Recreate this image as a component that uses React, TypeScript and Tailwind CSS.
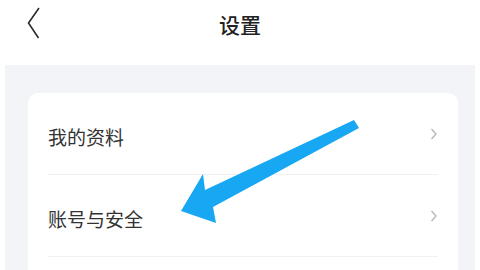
import React from "react";

const items = ["我的资料", "账号与安全"];

function Chevron() {
  return (
    <svg width="8" height="12" viewBox="0 0 8 12" className="mt-[-8px]">
      <path d="M1.5 1 L6 6 L1.5 11" fill="none" stroke="#b5b5b5" strokeWidth="1.3" />
    </svg>
  );
}

export default function App() {
  return (
    <div
      className="relative h-[270px] w-[480px] overflow-hidden bg-white"
      style={{ fontFamily: '"Noto Sans CJK SC", "Noto Sans", sans-serif' }}
    >
      <header className="relative flex h-[65px] items-center justify-center">
        <svg width="16" height="34" viewBox="0 0 16 34" className="absolute left-[25px] top-[6px]">
          <path d="M14 2 L3.5 17 L13.5 32" fill="none" stroke="#2b2b2b" strokeWidth="1.6" />
        </svg>
        <h1 className="mt-[-16px] text-[21px] font-medium text-[#222]">设置</h1>
      </header>

      <main className="mx-[5px] h-[205px] overflow-hidden bg-[#f3f4f8] pl-[23px] pr-[17px] pt-[28px]">
        <div className="h-[240px] rounded-[10px] bg-white px-[20px]">
          {items.map((label) => (
            <div
              key={label}
              className="flex h-[82px] items-center justify-between border-b border-[#f1f1f3] pt-[8px]"
            >
              <span className="text-[19px] text-[#333]">{label}</span>
              <Chevron />
            </div>
          ))}
        </div>
      </main>

      <svg width="480" height="270" className="pointer-events-none absolute left-0 top-0">
        <polygon
          points="354,120 359,128 213,207 216,223 181,211 203,174 205,190"
          fill="#17a7f3"
        />
      </svg>
    </div>
  );
}
